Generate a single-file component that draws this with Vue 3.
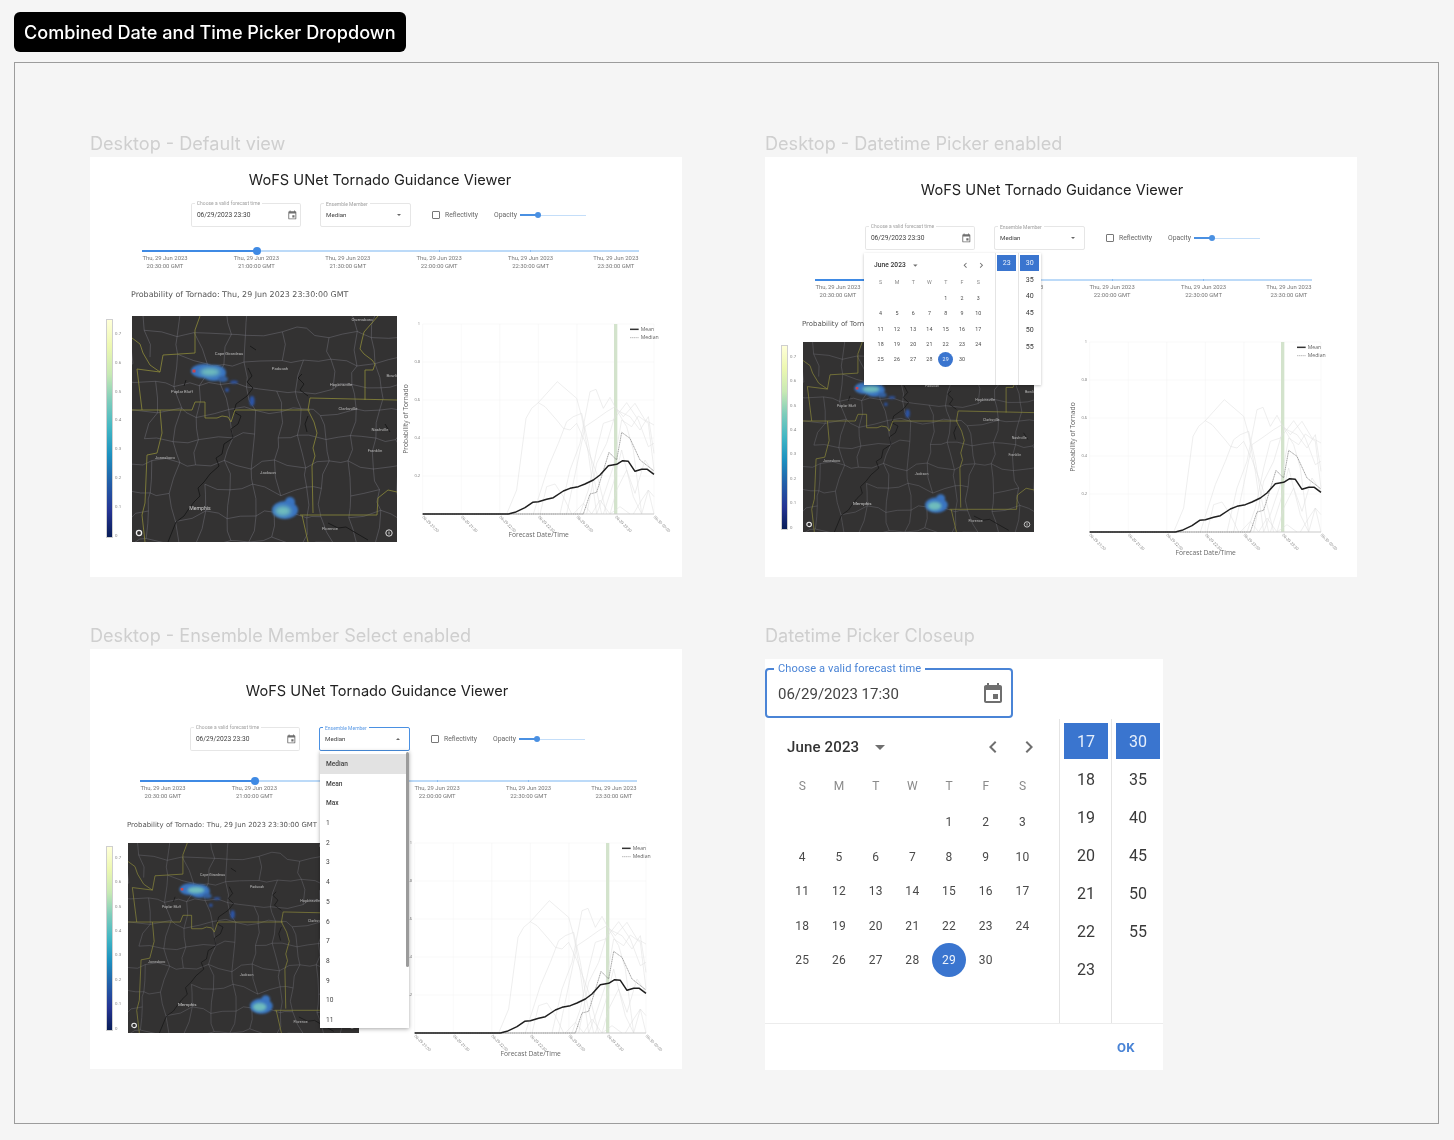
<script setup>
const views = [
  { id: 'default', label: 'Desktop - Default view', value: '06/29/2023 23:30' },
  { id: 'picker', label: 'Desktop - Datetime Picker enabled', value: '06/29/2023 23:30', picker: true, hours: ['23'] },
  { id: 'select', label: 'Desktop - Ensemble Member Select enabled', value: '06/29/2023 23:30', dropdown: true },
  {
    id: 'closeup',
    label: 'Datetime Picker Closeup',
    value: '06/29/2023 17:30',
    picker: true,
    closeup: true,
    hours: ['17', '18', '19', '20', '21', '22', '23']
  }
]

const weekdays = ['S', 'M', 'T', 'W', 'T', 'F', 'S']
const days = [...Array(4).fill(''), ...Array.from({ length: 30 }, (_, i) => String(i + 1))]
const minutes = ['30', '35', '40', '45', '50', '55']
const members = ['Median', 'Mean', 'Max', '1', '2', '3', '4', '5', '6', '7', '8', '9', '10', '11']
const marks = ['20:30:00', '21:00:00', '21:30:00', '22:00:00', '22:30:00', '23:30:00']
const scale = ['0.7', '0.6', '0.5', '0.4', '0.3', '0.2', '0.1', '0']

// county outlines: a jittered grid, good enough for a map this small
let seed = 11
function rand() {
  seed = (seed * 16807) % 2147483647
  return seed / 2147483647
}
function buildCounties() {
  const nodes = []
  for (let r = 0; r < 10; r++) {
    nodes.push([])
    for (let c = 0; c < 12; c++) {
      nodes[r].push([c * 25 - 6 + rand() * 14 - 7, r * 26 - 8 + rand() * 12 - 6])
    }
  }
  let d = ''
  const seg = (a, b) => {
    const mx = (a[0] + b[0]) / 2 + rand() * 7 - 3.5
    const my = (a[1] + b[1]) / 2 + rand() * 7 - 3.5
    d += `M${a[0].toFixed(1)} ${a[1].toFixed(1)}L${mx.toFixed(1)} ${my.toFixed(1)}L${b[0].toFixed(1)} ${b[1].toFixed(1)}`
  }
  for (let r = 0; r < 10; r++) {
    for (let c = 0; c < 12; c++) {
      if (c < 11 && rand() > 0.14) seg(nodes[r][c], nodes[r][c + 1])
      if (r < 9 && rand() > 0.16) seg(nodes[r][c], nodes[r + 1][c])
    }
  }
  return d
}
const counties = buildCounties()

const stateLines = [
  'M0 94L60 94L63 86L73 86L73 102L85 102L90 100L96 101L99 106L103 94L178 94',
  'M178 82L265 84',
  'M233 84L233 54L241 54L243 48L240 44L232 38L228 33L230 24L232 16L246 0',
  'M178 82L176 94L182 106L185 117L181 132L183 140L180 150L181 197',
  'M168 199L245 199L246 182L256 174L265 176',
  'M28 94L30 117L25 137L15 139L13 187L10 199L13 226',
  'M68 0L63 14L63 37L31 39L28 56L5 53L10 94',
  'M0 22L8 28L11 37L18 49L28 56',
  'M170 199L176 226'
]
const rivers = [
  'M116 52L120 60L115 66L121 72L115 80L104 88L102 96L109 100L106 108L99 113L101 122L92 128L90 138L84 142L87 150L78 158L72 166L66 172L68 180L62 186L56 194L52 200L44 206L40 216L36 226',
  'M170 58L166 62L172 68L168 74L176 80',
  'M176 100L173 108L175 116',
  'M196 207L206 212L214 211L224 217L236 224',
  'M118 30L124 34',
  'M54 64L52 70',
  'M253 108L258 116'
]
const cities = [
  { name: 'Owensboro', x: 230, y: 5 },
  { name: 'Cape Girardeau', x: 97, y: 39 },
  { name: 'Paducah', x: 148, y: 54 },
  { name: 'Bowling', x: 262, y: 61 },
  { name: 'Poplar Bluff', x: 50, y: 77 },
  { name: 'Hopkinsville', x: 209, y: 70 },
  { name: 'Clarksville', x: 216, y: 94 },
  { name: 'Nashville', x: 248, y: 115 },
  { name: 'Franklin', x: 243, y: 136 },
  { name: 'Murfreesboro', x: 278, y: 141 },
  { name: 'Jonesboro', x: 33, y: 143 },
  { name: 'Jackson', x: 136, y: 158 },
  { name: 'Memphis', x: 68, y: 194, big: true },
  { name: 'Florence', x: 198, y: 214 }
]

// chart coordinates: 3 units to the pixel
const xTicks = ['06-29 21:00', '06-29 21:30', '06-29 22:00', '06-29 22:30', '06-29 23:00', '06-29 23:30', '06-30 00:00']
const xAt = (i) => 68 + i * 115.67
const yTicks = [
  { label: '1', y: 42 },
  { label: '0.8', y: 156 },
  { label: '0.6', y: 270 },
  { label: '0.4', y: 384 },
  { label: '0.2', y: 498 }
]
const ensemble = [
  '320,612 350,540 378,325 395,295 415,278 435,290 470,330 490,355 510,360 530,340 555,395 590,490 620,612',
  '415,278 472,215 530,265 545,320 565,430 590,612',
  '420,612 440,530 465,522 490,560 515,612',
  '400,612 445,470 475,400 500,335 520,320 545,310 565,400 585,520 605,612',
  '480,612 510,480 540,400 570,245 588,238 610,295 630,262 650,300 680,350 700,420 725,612',
  '500,612 530,470 555,350 585,330 620,305 645,290 670,320 705,280 735,330 762,345',
  '540,612 565,540 590,420 610,340 640,330 680,278 715,330 745,410 762,400',
  '560,612 590,460 620,400 650,300 690,320 720,360 745,320 762,430',
  '590,612 610,560 640,470 665,330 695,350 715,318 745,340 762,480',
  '610,612 640,520 665,420 700,560 725,612 745,540 762,560',
  '520,612 550,580 575,612 600,570 630,612 660,590 690,612',
  '700,612 725,570 745,540 762,612',
  '630,612 650,540 680,480 705,550 735,450 762,490'
]
const median = '68,612 550,612 570,552 590,547 627,427 650,450 665,367 690,385 720,450 762,483'
const mean =
  '68,612 325,612 345,607 375,593 398,577 415,575 440,568 460,563 490,543 510,535 535,530 555,522 580,510 600,495 625,467 650,463 668,452 685,454 705,484 725,478 742,478 762,493'
</script>

<template>
  <div class="page">
    <div class="pill">Combined Date and Time Picker Dropdown</div>

    <div class="frame">
      <section v-for="view in views" :key="view.id" class="artboard" :class="`is-${view.id}`">
        <h2 class="art-label">{{ view.label }}</h2>

        <div class="board">
          <h1 v-if="!view.closeup" class="title">WoFS UNet Tornado Guidance Viewer</h1>

          <div class="controls">
            <div class="date-wrap">
              <div class="date-field">
                <span class="field-label">Choose a valid forecast time</span>
                <span class="date-value">{{ view.value }}</span>
                <svg class="cal-icon" viewBox="0 0 24 24">
                  <path d="M17 12h-5v5h5v-5zM16 1v2H8V1H6v2H5c-1.11 0-1.99.9-1.99 2L3 19c0 1.1.89 2 2 2h14c1.1 0 2-.9 2-2V5c0-1.1-.9-2-2-2h-1V1h-2zm3 18H5V8h14v11z" />
                </svg>
              </div>

              <div v-if="view.picker" class="picker">
                <div class="picker-body">
                  <div class="calendar">
                    <div class="cal-head">
                      <span class="cal-month">June 2023</span>
                      <svg class="cal-caret" viewBox="0 0 24 24"><path d="M7 10l5 5 5-5z" /></svg>
                      <svg class="cal-arrow prev" viewBox="0 0 24 24"><path d="M15.41 7.41 14 6l-6 6 6 6 1.41-1.41L10.83 12z" /></svg>
                      <svg class="cal-arrow" viewBox="0 0 24 24"><path d="M10 6 8.59 7.41 13.17 12l-4.58 4.59L10 18l6-6z" /></svg>
                    </div>
                    <div class="cal-grid">
                      <span v-for="(d, i) in weekdays" :key="'w' + i" class="weekday">{{ d }}</span>
                      <span v-for="(d, i) in days" :key="'d' + i" class="day">
                        <b v-if="d === '29'" class="day-on">{{ d }}</b>
                        <template v-else>{{ d }}</template>
                      </span>
                    </div>
                  </div>
                  <div class="time-col">
                    <span v-for="(h, i) in view.hours" :key="h" class="time-item" :class="{ on: i === 0 }">{{ h }}</span>
                  </div>
                  <div class="time-col">
                    <span v-for="(m, i) in minutes" :key="m" class="time-item" :class="{ on: i === 0 }">{{ m }}</span>
                  </div>
                </div>
                <div v-if="view.closeup" class="picker-foot"><span class="ok">OK</span></div>
              </div>
            </div>

            <template v-if="!view.closeup">
              <div class="select" :class="{ open: view.dropdown }">
                <span class="field-label small">Ensemble Member</span>
                <span>Median</span>
                <i class="select-caret"></i>
                <ul v-if="view.dropdown" class="menu">
                  <li v-for="(m, i) in members" :key="m" :class="{ active: i === 0, strong: i < 3 }">{{ m }}</li>
                  <li class="menu-bar"></li>
                </ul>
              </div>
              <span class="checkbox"></span>
              <span class="ctl-text">Reflectivity</span>
              <span class="ctl-text opacity">Opacity</span>
              <span class="op-slider"><i class="op-fill"></i><i class="op-thumb"></i></span>
            </template>
          </div>

          <template v-if="!view.closeup">
            <div class="timeline">
              <div class="track">
                <i class="track-fill"></i>
                <i class="track-thumb"></i>
                <i class="track-tick a"></i>
                <i class="track-tick b"></i>
              </div>
              <div class="marks">
                <span v-for="m in marks" :key="m" class="mark">Thu, 29 Jun 2023<br />{{ m }} GMT</span>
              </div>
            </div>

            <p class="heading">Probability of Tornado: Thu, 29 Jun 2023 23:30:00 GMT</p>

            <div class="main">
              <div class="colorbar">
                <i class="color-ramp"></i>
                <div class="color-scale">
                  <span v-for="s in scale" :key="s">{{ s }}</span>
                </div>
              </div>

              <svg class="map" viewBox="0 0 265 226" preserveAspectRatio="none">
                <rect width="265" height="226" fill="#333232" />
                <path :d="counties" fill="none" stroke="#8f8f9c" stroke-width="0.55" opacity="0.6" />
                <path v-for="(d, i) in rivers" :key="'r' + i" :d="d" fill="none" stroke="#141414" stroke-width="0.8" />
                <path v-for="(d, i) in stateLines" :key="'s' + i" :d="d" fill="none" stroke="#8d8a3a" stroke-width="0.8" />
                <g class="blob-outer">
                  <ellipse cx="72" cy="55" rx="13" ry="7" fill="#3a74c0" />
                  <ellipse cx="82" cy="57" rx="12" ry="8" fill="#3a74c0" />
                  <ellipse cx="91" cy="63" rx="5" ry="3" fill="#34609f" />
                  <ellipse cx="153" cy="194" rx="13" ry="9" fill="#3a74c0" />
                  <ellipse cx="158" cy="186" rx="5" ry="5" fill="#3a74c0" />
                  <ellipse cx="120" cy="85" rx="2.5" ry="5" fill="#2c55a8" />
                  <ellipse cx="102" cy="66" rx="4" ry="1.6" fill="#2c55a8" />
                  <ellipse cx="95" cy="74" rx="2" ry="2" fill="#2c55a8" />
                </g>
                <g class="blob-inner">
                  <ellipse cx="78" cy="56" rx="10" ry="4" fill="#6fbcbc" />
                  <ellipse cx="151" cy="195" rx="8" ry="5" fill="#6fbcbc" />
                </g>
                <rect x="60.5" y="53.5" width="3" height="3" fill="#c8434c" />
                <text
                  v-for="c in cities"
                  :key="c.name"
                  class="city"
                  :class="{ big: c.big }"
                  :x="c.x"
                  :y="c.y"
                >{{ c.name }}</text>
                <circle cx="7" cy="217" r="2.6" fill="none" stroke="#eee" stroke-width="1.3" />
                <circle cx="257" cy="217" r="3.2" fill="none" stroke="#eee" stroke-width="0.9" />
                <rect x="256.6" y="215.6" width="0.8" height="2.8" fill="#eee" />
              </svg>

              <svg class="chart" viewBox="0 0 840 705">
                <line v-for="t in yTicks" :key="t.y" x1="68" x2="762" :y1="t.y" :y2="t.y" stroke="#f3f3f3" stroke-width="1.5" />
                <line v-for="(t, i) in xTicks" :key="t" :x1="xAt(i)" :x2="xAt(i)" y1="42" y2="612" stroke="#f3f3f3" stroke-width="1.5" />
                <rect x="642" y="42" width="10" height="570" fill="#d3e3cc" />
                <polyline v-for="(pts, i) in ensemble" :key="i" :points="pts" fill="none" stroke="#dedede" stroke-width="1.6" />
                <line x1="68" x2="762" y1="612" y2="612" stroke="#c9c9c9" stroke-width="3" />
                <polyline :points="median" fill="none" stroke="#777" stroke-width="2" stroke-dasharray="4 1.5" />
                <polyline :points="mean" fill="none" stroke="#1f1f1f" stroke-width="4.5" stroke-linejoin="round" />
                <text v-for="t in yTicks" :key="'l' + t.y" class="tick" x="60" :y="t.y + 3" text-anchor="end">{{ t.label }}</text>
                <text
                  v-for="(t, i) in xTicks"
                  :key="'x' + t"
                  class="tick"
                  :transform="`translate(${xAt(i) - 2} 622) rotate(45)`"
                >{{ t }}</text>
                <text class="axis" x="416" y="682" text-anchor="middle">Forecast Date/Time</text>
                <text class="axis" transform="translate(24 327) rotate(-90)" text-anchor="middle">Probability of Tornado</text>
                <line x1="690" x2="716" y1="58" y2="58" stroke="#333" stroke-width="4.5" />
                <line x1="690" x2="716" y1="83" y2="83" stroke="#999" stroke-width="2" stroke-dasharray="4 1.5" />
                <text class="legend" x="722" y="63">Mean</text>
                <text class="legend" x="722" y="88">Median</text>
              </svg>
            </div>
          </template>
        </div>
      </section>
    </div>
  </div>
</template>

<style>
html,
body {
  margin: 0;
  background: #f5f5f5;
}
</style>

<style scoped>
.page {
  width: 1454px;
  height: 1140px;
  box-sizing: border-box;
  padding: 12px 14px 0;
  background: #f5f5f5;
  font-family: Roboto, "Liberation Sans", sans-serif;
  overflow: hidden;
  /* the reference is a soft, resampled capture */
  filter: blur(0.35px);
}

.pill {
  display: inline-block;
  box-sizing: border-box;
  width: 392px;
  height: 40px;
  line-height: 41px;
  padding: 0 10px;
  border-radius: 6px;
  background: #000;
  color: #fff;
  font-family: Inter, sans-serif;
  font-size: 18.1px;
  font-weight: 500;
  white-space: nowrap;
}

.frame {
  box-sizing: border-box;
  height: 1062px;
  width: 1425px;
  margin-top: 10px;
  padding: 69px 0 0 75px;
  border: 1px solid #9c9c9c;
  display: grid;
  grid-template-columns: 592px 592px;
  grid-auto-rows: max-content;
  column-gap: 83px;
  row-gap: 47px;
  align-content: start;
}

.art-label {
  margin: 0;
  height: 25px;
  line-height: 23px;
  font-family: Inter, sans-serif;
  font-size: 18.1px;
  font-weight: 400;
  color: #cfcfcf;
  white-space: nowrap;
}

.board {
  box-sizing: border-box;
  height: 420px;
  padding: 24px 0 0 16px;
  background: #fff;
}

.is-default .board {
  padding-top: 14px;
}

.is-select .board {
  padding-top: 33px;
}

.is-closeup .board {
  width: 398px;
  height: 410px;
  margin-top: 10px;
  padding: 9px 0 0;
}

.title {
  margin: 0;
  width: 542px;
  height: 18px;
  line-height: 18px;
  text-align: center;
  font-family: Inter, sans-serif;
  font-size: 14.6px;
  font-weight: 400;
  color: #222;
  white-space: nowrap;
}

.is-default .title {
  width: 548px;
}

.controls {
  display: flex;
  align-items: center;
  height: 24px;
  margin: 27px 0 0 84px;
  font-size: 6.2px;
  color: #555;
}

.is-default .controls {
  margin: 14px 0 0 85px;
}

.is-closeup .controls {
  display: block;
  height: auto;
  margin: 0;
}

.date-wrap {
  position: relative;
  zoom: 0.4435;
  flex: none;
  z-index: 3;
}

.is-closeup .date-wrap {
  zoom: 1;
}

.date-field {
  position: relative;
  box-sizing: border-box;
  width: 248px;
  height: 54px;
  display: flex;
  align-items: center;
  justify-content: space-between;
  padding: 1px 6px 0 11px;
  border: 2px solid #e6e6e6;
  border-radius: 4px;
  background: #fff;
}

.is-closeup .date-field {
  height: 50px;
  border-color: #4a84d6;
}

.field-label {
  position: absolute;
  top: -8px;
  left: 7px;
  padding: 0 4px;
  background: #fff;
  font-size: 11.1px;
  line-height: 14px;
  letter-spacing: 0.1px;
  color: #a0a0a0;
  white-space: nowrap;
}

.is-closeup .field-label {
  color: #4a84d6;
}

.date-value {
  font-size: 15px;
  color: #444;
}

.cal-icon {
  width: 24px;
  height: 24px;
  fill: #6f6f6f;
}

.picker {
  position: absolute;
  top: calc(100% + 7px);
  left: -2px;
  width: 398px;
  background: #fff;
  box-shadow: 0 2px 6px rgba(0, 0, 0, 0.25);
}

.is-closeup .picker {
  position: static;
  margin-top: 1px;
  box-shadow: none;
}

.picker-body {
  display: grid;
  grid-template-columns: 294px 52px 52px;
  height: 298px;
}

.is-closeup .picker-body {
  height: 304px;
}

.calendar {
  padding: 10px 18px 0 19px;
}

.cal-head {
  display: flex;
  align-items: center;
  height: 36px;
  margin-bottom: 3px;
  padding-left: 3px;
}

.cal-month {
  font-size: 15px;
  font-weight: 500;
  letter-spacing: 0.15px;
  color: #333;
  white-space: nowrap;
}

.cal-caret {
  width: 24px;
  height: 24px;
  margin-left: 9px;
  fill: #6f6f6f;
}

.cal-arrow {
  width: 24px;
  height: 24px;
  margin-left: 12px;
  fill: #6f6f6f;
}

.cal-arrow.prev {
  margin-left: auto;
}

.cal-grid {
  display: grid;
  grid-template-columns: repeat(7, 36.7px);
  grid-template-rows: 37px;
  grid-auto-rows: 34.5px;
  text-align: center;
  font-size: 12px;
  color: #4a4a4a;
}

.weekday {
  line-height: 36px;
  color: #8a8a8a;
}

.day {
  line-height: 34.5px;
  letter-spacing: 0.3px;
}

.day-on {
  display: block;
  width: 34px;
  height: 34px;
  line-height: 34px;
  margin: 0 auto;
  border-radius: 50%;
  background: #3a75cf;
  color: #eef4fc;
  font-weight: 400;
}

.time-col {
  display: flex;
  flex-direction: column;
  padding-top: 4px;
  border-left: 1px solid #e4e4e4;
}

.time-item {
  flex: none;
  height: 36px;
  line-height: 37px;
  margin: 0 3px 2px 4px;
  text-align: center;
  font-size: 16px;
  color: #3a3a3a;
}

.time-item.on {
  background: #3a75cf;
  color: #e6effb;
}

.picker-foot {
  display: flex;
  justify-content: flex-end;
  align-items: center;
  height: 46px;
  padding-right: 28px;
  border-top: 1px solid #ececec;
}

.ok {
  font-size: 13px;
  font-weight: 700;
  letter-spacing: 0.4px;
  color: #4a84d6;
}

.select {
  position: relative;
  box-sizing: border-box;
  flex: none;
  width: 91px;
  height: 24px;
  margin-left: 19px;
  display: flex;
  align-items: center;
  padding-left: 5px;
  border: 1px solid #e6e6e6;
  border-radius: 2px;
  background: #fff;
  color: #444;
}

.select.open {
  border-color: #4a90e2;
}

.field-label.small {
  top: -3px;
  left: 3px;
  padding: 0 2px;
  font-size: 5px;
  line-height: 6px;
  letter-spacing: 0;
}

.select.open .field-label {
  color: #5a9ae6;
}

.select-caret {
  position: absolute;
  right: 9px;
  top: 10px;
  border: 2px solid transparent;
  border-top-color: #666;
  border-bottom: 0;
}

.select.open .select-caret {
  border-top: 0;
  border-bottom: 2px solid #666;
}

.menu {
  position: absolute;
  top: calc(100% + 1px);
  left: 0;
  width: 89px;
  height: 274px;
  margin: 0;
  padding: 3px 0 0;
  list-style: none;
  overflow: hidden;
  background: #fff;
  box-shadow: 0 1px 4px rgba(0, 0, 0, 0.35);
  z-index: 4;
}

.menu li {
  height: 19.7px;
  line-height: 20.7px;
  padding-left: 6px;
  font-size: 6.6px;
  color: #444;
}

.menu li.strong {
  font-weight: 500;
}

.menu li.active {
  background: #e2e2e2;
}

.menu .menu-bar {
  position: absolute;
  top: 1px;
  right: 0;
  width: 3px;
  height: 215px;
  padding: 0;
  border-radius: 2px;
  background: #9b9b9b;
}

.checkbox {
  flex: none;
  box-sizing: border-box;
  width: 8px;
  height: 8px;
  margin-left: 21px;
  border: 1px solid #777;
  border-radius: 1px;
}

.ctl-text {
  flex: none;
  margin-left: 5px;
  font-size: 6.8px;
  color: #666;
}

.ctl-text.opacity {
  margin-left: 16px;
}

.op-slider {
  position: relative;
  flex: none;
  width: 66px;
  height: 1px;
  margin-left: 3px;
  background: #c4def9;
}

.op-fill {
  position: absolute;
  left: 0;
  top: -0.5px;
  width: 18px;
  height: 1.5px;
  background: #4a90e2;
}

.op-thumb {
  position: absolute;
  left: 15px;
  top: -2.5px;
  width: 6px;
  height: 6px;
  border-radius: 50%;
  background: #4a90e2;
}

.timeline {
  width: 497px;
  margin: 26px 0 0 34px;
}

.is-default .timeline {
  margin: 20px 0 0 36px;
}

.track {
  position: relative;
  height: 7px;
}

.track::before {
  content: "";
  position: absolute;
  left: 0;
  right: 0;
  top: 2.5px;
  height: 2px;
  background: #bcdaf8;
}

.track-fill {
  position: absolute;
  left: 0;
  top: 2.5px;
  width: 115px;
  height: 2px;
  background: #3f8ae4;
}

.track-thumb {
  position: absolute;
  left: 111px;
  top: -0.5px;
  width: 8px;
  height: 8px;
  border-radius: 50%;
  background: #3f8ae4;
}

.track-tick {
  position: absolute;
  top: 2.5px;
  width: 1px;
  height: 2px;
  background: #8dbdf0;
}

.track-tick.a {
  left: 297px;
}

.track-tick.b {
  left: 388px;
}

.marks {
  display: flex;
  gap: 45.4px;
}

.mark {
  flex: none;
  width: 46px;
  line-height: 8px;
  text-align: center;
  font-size: 5.9px;
  color: #777;
  white-space: nowrap;
}

.mark:last-child {
  margin-left: -6px;
}

.heading {
  height: 10px;
  line-height: 10px;
  margin: 20px 0 0 21px;
  font-family: "DejaVu Sans", sans-serif;
  font-size: 6.95px;
  color: #555;
  white-space: nowrap;
}

.is-default .heading {
  margin-left: 25px;
  font-size: 7.95px;
}

.main {
  display: flex;
  align-items: flex-start;
  height: 190px;
  margin-top: 13px;
}

.is-default .main {
  height: 226px;
  margin-top: 16px;
}

.colorbar {
  flex: none;
  display: flex;
  box-sizing: border-box;
  width: 22px;
  height: 100%;
  padding: 3px 0 2px;
}

.is-default .colorbar {
  width: 26px;
  padding-bottom: 4px;
}

.color-ramp {
  flex: none;
  box-sizing: border-box;
  width: 7px;
  border: 1px solid #cfcfcf;
  background: linear-gradient(to top, #081d58, #253494 12%, #225ea8 25%, #1d91c0 38%, #41b6c4 50%, #7fcdbb 63%, #c7e9b4 75%, #edf8b1 88%, #ffffd9);
}

.color-scale {
  display: flex;
  flex-direction: column;
  justify-content: space-between;
  padding: 10px 0 0 2px;
  font-size: 4.4px;
  line-height: 1;
  color: #888;
}

.is-default .color-scale {
  padding-top: 13px;
}

.map {
  flex: none;
  width: 231px;
  height: 190px;
}

.is-default .map {
  width: 265px;
  height: 226px;
}

.chart {
  flex: none;
  width: 280px;
  height: 235px;
  margin: -14px 0 0 33px;
}

.is-default .chart {
  margin: -6px 0 0 3px;
}

.blob-outer {
  filter: blur(1.2px);
}

.blob-inner {
  filter: blur(2px);
}

.city {
  font-family: Roboto, sans-serif;
  font-size: 4.2px;
  fill: #b9b9b9;
  text-anchor: middle;
}

.city.big {
  font-size: 5.2px;
  fill: #ccc;
}

.tick {
  font-family: "Open Sans", sans-serif;
  font-size: 12px;
  fill: #777;
}

.axis {
  font-family: "Open Sans", sans-serif;
  font-size: 20px;
  fill: #666;
}

.legend {
  font-family: "Open Sans", sans-serif;
  font-size: 15.5px;
  fill: #666;
}
</style>
